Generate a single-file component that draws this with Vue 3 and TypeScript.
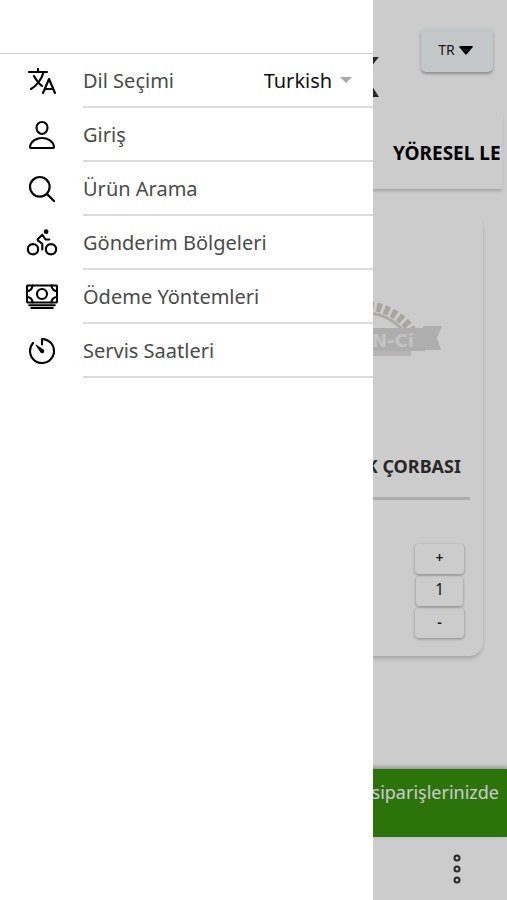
<script setup lang="ts">
import { ref } from 'vue'

interface MenuLink {
  label: string
  icon: 'person' | 'search' | 'bike' | 'cash' | 'timer'
}

const links: MenuLink[] = [
  { label: 'Giriş', icon: 'person' },
  { label: 'Ürün Arama', icon: 'search' },
  { label: 'Gönderim Bölgeleri', icon: 'bike' },
  { label: 'Ödeme Yöntemleri', icon: 'cash' },
  { label: 'Servis Saatleri', icon: 'timer' },
]

const language = ref<string>('Turkish')
const quantity = ref<number>(1)

function change(step: number): void {
  quantity.value = Math.max(1, quantity.value + step)
}
</script>

<template>
  <div class="app">
    <div class="page">
      <header class="top">
        <span class="brand">K</span>
        <button class="lang" type="button">
          TR
          <svg class="caret" viewBox="0 0 14 9" aria-hidden="true"><path d="M1 0h12q1.500 0 .6 1.200L8 8q-1 1-2 0L.4 1.200Q-.5 0 1 0z" /></svg>
        </button>
      </header>

      <nav class="tabs"><a href="#yoresel">YÖRESEL LE</a></nav>

      <main class="content">
        <article class="card">
          <svg class="emblem" viewBox="0 0 200 80" aria-hidden="true">
            <circle cx="123" cy="66" r="50" fill="none" stroke="#d8d6d2" stroke-width="3" />
            <circle cx="123" cy="66" r="57" fill="none" stroke="#d3d0ca" stroke-width="9" stroke-dasharray="5 3" />
            <path d="M0 54h200v26H0z" fill="#fff" />
            <path d="M20 31h161v-2h19l-5 12 4 12h-18v1H20z" fill="#dadada" />
            <path d="M50 54h119v5H50z" fill="#e4e2e1" />
            <text x="130" y="50" font-size="18">N-Ci</text>
          </svg>
          <h2>K ÇORBASI</h2>
          <div class="stepper">
            <button type="button" aria-label="Artır" @click="change(1)">+</button>
            <output>{{ quantity }}</output>
            <button type="button" aria-label="Azalt" @click="change(-1)">-</button>
          </div>
        </article>
      </main>

      <p class="notice">siparişlerinizde</p>

      <footer class="bottom">
        <button class="more" type="button" aria-label="Menü">
          <svg viewBox="0 0 10 32" aria-hidden="true">
            <circle cx="5" cy="5" r="2.500" />
            <circle cx="5" cy="16" r="2.500" />
            <circle cx="5" cy="27" r="2.500" />
          </svg>
        </button>
      </footer>
    </div>

    <div class="backdrop"></div>

    <aside class="drawer">
      <div class="drawer-head"></div>
      <ul class="menu">
        <li class="item">
          <svg class="icon" viewBox="0 0 512 512" aria-hidden="true">
            <path d="M48 112h288M192 64v48M272 448l96-224 96 224M301.500 384h133M281.300 112S257 206 199 277 80 384 80 384" />
            <path d="M256 336s-35-27-72-75-56-85-56-85" />
          </svg>
          <div class="row">
            <label for="language">Dil Seçimi</label>
            <span class="picker">
              <select id="language" v-model="language">
                <option>Turkish</option>
                <option>English</option>
              </select>
              <svg class="arrow" viewBox="0 0 12 6" aria-hidden="true"><path d="M0 0h12L6 6z" /></svg>
            </span>
          </div>
        </li>
        <li v-for="link in links" :key="link.icon" class="item">
          <svg class="icon" viewBox="0 0 512 512" aria-hidden="true">
            <template v-if="link.icon === 'person'">
              <path d="M344 144c-3.920 52.870-44 96-88 96s-84.150-43.120-88-96c-4-55 35-96 88-96s92 42 88 96z" />
              <path d="M256 304c-87 0-175.300 48-191.640 138.600C62.390 453.520 68.570 464 80 464h352c11.440 0 17.620-10.480 15.650-21.400C431.300 352 343 304 256 304z" />
            </template>
            <template v-else-if="link.icon === 'search'">
              <circle cx="221" cy="221" r="157" />
              <path d="M338 338L448 448" />
            </template>
            <template v-else-if="link.icon === 'bike'">
              <circle cx="112" cy="356" r="82" />
              <circle cx="400" cy="356" r="82" />
              <circle class="solid" cx="322" cy="74" r="38" />
              <path d="M261 360v-92l-68-50q-14-12-2-26l70-68 46 68q6 8 16 8h50" />
            </template>
            <template v-else-if="link.icon === 'cash'">
              <rect x="16" y="72" width="480" height="272" rx="16" />
              <circle cx="256" cy="208" r="80" />
              <path d="M52 388h408M84 432h344M496 160a88 88 0 0 1-88-88M16 160a88 88 0 0 0 88-88M496 256a88 88 0 0 0-88 88M16 256a88 88 0 0 1 88 88" />
            </template>
            <template v-else>
              <path d="M112.910 128A191.850 191.850 0 0 0 64 254c-1.180 106.350 85.650 193.800 192 194 106.200.2 192-85.830 192-192 0-104.540-83.550-189.610-187.500-192a4.360 4.360 0 0 0-4.500 4.370V152" />
              <path class="solid" d="M233.380 278.630l-79-113a8.130 8.130 0 0 1 11.320-11.320l113 79a32.500 32.500 0 0 1-37.250 53.260 33.210 33.210 0 0 1-8.070-7.940z" />
            </template>
          </svg>
          <a class="row" href="#">{{ link.label }}</a>
        </li>
      </ul>
    </aside>
  </div>
</template>

<style>
body {
  margin: 0;
}
</style>

<style scoped>
.app {
  position: relative;
  min-height: 100vh;
  overflow: hidden;
  font-family: "Noto Sans", "Open Sans", sans-serif;
  color: #000;
}
.app * {
  box-sizing: border-box;
}
button,
select {
  font: inherit;
  color: inherit;
  border: 0;
  padding: 0;
  background: none;
}
a {
  color: inherit;
  text-decoration: none;
}
.page {
  display: flex;
  flex-direction: column;
  min-height: 100vh;
  background: #fff;
}
.top {
  display: flex;
  justify-content: flex-end;
  align-items: flex-start;
  gap: 42px;
  height: 112px;
  padding: 28px 14px 0 0;
}
.brand {
  padding-top: 19px;
  font-size: 56px;
  line-height: 56px;
  font-weight: 700;
  color: #333;
}
.lang {
  display: flex;
  align-items: center;
  justify-content: center;
  gap: 4px;
  width: 72px;
  height: 44px;
  padding-right: 3px;
  border-radius: 5px;
  background: #f6f9fb;
  box-shadow: 0 2px 3px rgba(0, 0, 0, 0.3);
  font-size: 14px;
  line-height: 20px;
  color: #222;
}
.caret {
  width: 14px;
  height: 9px;
  fill: #000;
}
.tabs {
  height: 77px;
  margin-right: 4px;
  padding: 27px 0 0 393px;
  white-space: nowrap;
  font-size: 19px;
  line-height: 28px;
  font-weight: 700;
  box-shadow: 0 3px 3px -1px rgba(0, 0, 0, 0.2);
}
.content {
  flex: 1;
  padding: 24px 24px 0;
}
.card {
  display: flex;
  flex-direction: column;
  align-items: flex-end;
  height: 443px;
  padding: 84px 13px 18px;
  border-radius: 14px;
  box-shadow: 0 3px 4px -1px rgba(0, 0, 0, 0.22);
}
.emblem {
  width: 200px;
  height: 80px;
  margin-right: 28px;
}
.emblem text {
  fill: #f4f4f4;
  font-family: "DejaVu Sans", sans-serif;
  font-weight: 700;
}
.card h2 {
  align-self: stretch;
  margin: 75px 0 0;
  padding: 0 9px 17px 0;
  border-bottom: 3px solid #d8d8d8;
  text-align: right;
  font-size: 18px;
  line-height: 28px;
  color: #333;
}
.stepper {
  display: flex;
  flex-direction: column;
  width: 49px;
  margin: auto 6px 0 0;
  font-size: 14px;
  text-align: center;
  color: #222;
}
.stepper button,
.stepper output {
  height: 30px;
  border-radius: 4px;
  box-shadow: 0 1px 3px rgba(0, 0, 0, 0.35);
}
.stepper button {
  padding-bottom: 4px;
  font-weight: 600;
}
.stepper output {
  margin: 2px 1px;
  font-size: 16px;
  line-height: 26px;
}
.notice {
  height: 68px;
  margin: 0;
  padding: 9px 8px 0;
  background: #38900f;
  box-shadow: 0 -2px 4px rgba(0, 0, 0, 0.3);
  text-align: right;
  font-size: 18px;
  line-height: 28px;
  color: #fff;
}
.bottom {
  display: flex;
  justify-content: flex-end;
  align-items: center;
  height: 63px;
  padding-right: 45px;
}
.more {
  display: flex;
}
.more svg {
  width: 10px;
  height: 32px;
  fill: none;
  stroke: #333;
  stroke-width: 2;
}
.backdrop {
  position: absolute;
  inset: 0;
  background: rgba(0, 0, 0, 0.2);
}
.drawer {
  position: absolute;
  top: 0;
  bottom: 0;
  left: 0;
  width: 73.500%;
  background: #fff;
}
.drawer-head {
  height: 54px;
  border-bottom: 1px solid #d0d0d0;
}
.menu {
  margin: 0;
  padding: 0;
  list-style: none;
}
.item {
  display: flex;
  align-items: center;
  gap: 25px;
  padding-left: 26px;
}
.icon {
  flex: none;
  width: 32px;
  height: 32px;
  fill: none;
  stroke: #000;
  stroke-width: 34;
  stroke-linecap: round;
  stroke-linejoin: round;
}
.icon .solid {
  fill: #000;
  stroke: none;
}
.row {
  display: flex;
  flex: 1;
  align-items: center;
  justify-content: space-between;
  height: 54px;
  border-bottom: 2px solid #dcdcdc;
  font-size: 20px;
  color: #4a4a4a;
}
.picker {
  display: flex;
  align-items: center;
  gap: 7px;
  padding-right: 21px;
  color: #111;
}
.picker select {
  appearance: none;
}
.arrow {
  width: 12px;
  height: 6px;
  fill: #a8a8a8;
}
</style>
